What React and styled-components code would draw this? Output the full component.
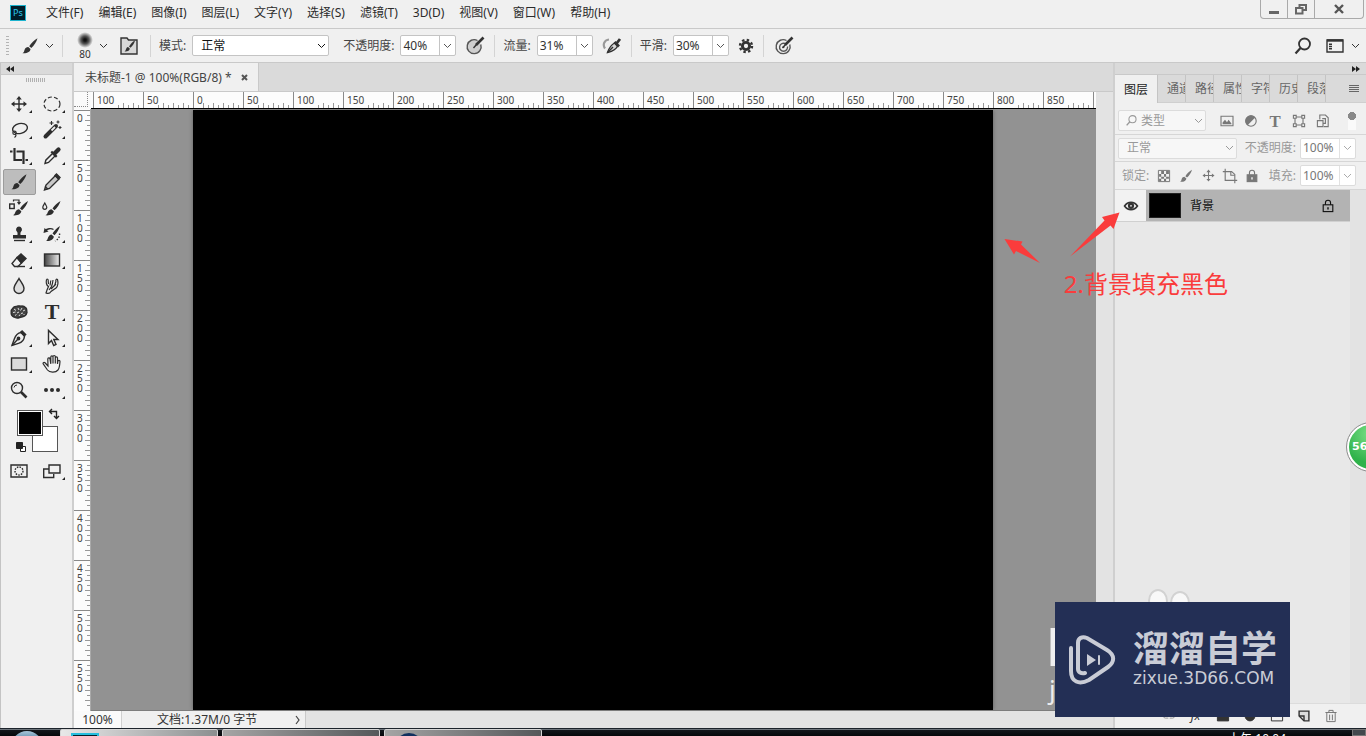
import React from "react";
import styled, { createGlobalStyle, css } from "styled-components";

const GlobalStyle = createGlobalStyle`
  * {
    box-sizing: border-box;
  }
  body {
    margin: 0;
    font-family: "Noto Sans", "Noto Sans CJK SC", sans-serif;
    font-size: 12px;
    line-height: 16px;
    color: #333;
    background-color: #f0f0f0;
  }
  button, input, select {
    font: inherit;
    color: inherit;
  }
  button {
    padding: 0;
    border: none;
    background: none;
  }
  svg {
    display: block;
    flex-shrink: 0;
  }
`;

const Shell = styled.div`
  position: relative;
  display: flex;
  flex-direction: column;
  height: 100vh;
  overflow: hidden;
`;

/* ---------- menu bar ---------- */

const MenuBar = styled.header`
  display: flex;
  align-items: center;
  height: 29px;
  padding: 0 2px 2px 10px;
  border-bottom: 1px solid #c9c9c9;
`;

const Menus = styled.nav`
  display: flex;
  flex: 1;
  gap: 15px;
  margin-left: 20px;
`;

const MenuButton = styled.button`
  white-space: nowrap;
  color: #2b2b2b;
`;

const PsLogo = styled.div`
  width: 16px;
  height: 16px;
  border: 1px solid #1cb4cf;
  background-color: #001e2b;
  color: #2fc9ee;
  font-size: 9px;
  line-height: 14px;
  text-align: center;
`;

const WindowButtons = styled.div`
  display: flex;
  align-self: flex-start;
  height: 19px;
  border: 1px solid #a9a9a9;
  border-top: none;
  border-radius: 0 0 4px 4px;
`;

const WindowButton = styled.button`
  display: flex;
  align-items: center;
  justify-content: center;
  width: ${({ $wide }) => ($wide ? "48px" : "27px")};
  border-right: 1px solid #a9a9a9;
  &:last-child {
    border-right: none;
  }
`;

/* ---------- option bar ---------- */

const OptionBar = styled.div`
  display: flex;
  align-items: center;
  height: 34px;
  padding: 0 6px;
  border-bottom: 1px solid #c9c9c9;
`;

const Grip = styled.div`
  width: 3px;
  height: 20px;
  margin-right: 6px;
  background: repeating-linear-gradient(#b4b4b4 0 1px, transparent 1px 3px);
`;

const Divider = styled.div`
  width: 1px;
  height: 22px;
  margin: 0 8px 0 ${({ $spaced }) => ($spaced ? "8px" : "0")};
  background-color: #d4d4d4;
`;

const IconButton = styled.button`
  display: flex;
  align-items: center;
  justify-content: center;
  align-self: center;
  width: ${({ $w }) => $w || 24}px;
  height: 24px;
`;

const BrushPreview = styled.button`
  display: flex;
  flex-direction: column;
  align-items: center;
  width: 28px;
  font-size: 10px;
  line-height: 12px;
`;

const BrushDot = styled.span`
  width: 16px;
  height: 16px;
  border-radius: 50%;
  background: radial-gradient(#111 10%, #555 35%, transparent 70%);
`;

const Label = styled.label`
  margin-right: ${({ $dim }) => ($dim ? "4px" : "6px")};
  white-space: nowrap;
  color: ${({ $dim }) => ($dim ? "#999" : "#444")};
`;

const SelectWrap = styled.div`
  display: grid;
  align-items: center;
  width: ${({ $w }) => $w}px;
  height: 21px;
  margin-right: ${({ $after }) => $after || 0}px;
  border: 1px solid ${({ $dim }) => ($dim ? "#dcdcdc" : "#c4c4c4")};
  border-radius: 2px;
  background-color: ${({ $dim }) => ($dim ? "#f7f7f7" : "#fff")};
  color: ${({ $dim }) => ($dim ? "#999" : "#111")};
  > * {
    grid-area: 1 / 1;
  }
  svg {
    justify-self: end;
    margin-right: 2px;
    pointer-events: none;
  }
`;

const Select = styled.select`
  width: 100%;
  height: 19px;
  padding: 0 8px;
  border: none;
  appearance: none;
  background: transparent;
`;

const SearchSelect = styled(SelectWrap)`
  select {
    padding-left: 22px;
  }
  svg:first-of-type {
    justify-self: start;
    margin-left: 6px;
  }
`;

const FieldWrap = styled.div`
  display: flex;
  width: 56px;
  height: 21px;
  border: 1px solid ${({ $dim }) => ($dim ? "#dcdcdc" : "#c4c4c4")};
  border-radius: 2px;
  background-color: #fff;
`;

const FieldInput = styled.input`
  flex: 1;
  min-width: 0;
  padding: 0 2px;
  border: none;
  background: transparent;
  outline: none;
`;

const FieldArrow = styled.button`
  display: flex;
  align-items: center;
  justify-content: center;
  width: 16px;
  border-left: 1px solid ${({ $dim }) => ($dim ? "#e2e2e2" : "#c4c4c4")};
  color: ${({ $dim }) => ($dim ? "#aaa" : "#555")};
`;

const Spacer = styled.div`
  flex: 1;
`;

/* ---------- workspace ---------- */

const Workspace = styled.div`
  display: flex;
  flex: 1;
  min-height: 0;
`;

const PanelHead = styled.div`
  display: flex;
  align-items: center;
  justify-content: ${({ $end }) => ($end ? "flex-end" : "flex-start")};
  height: 12px;
  padding: 0 6px 0 5px;
  border-bottom: 1px solid #c9c9c9;
  background-color: #dadada;
`;

const ToolsPanel = styled.aside`
  display: flex;
  flex-direction: column;
  width: 74px;
  border-left: 1px solid #c4c4c4;
  border-right: 2px solid #cfcfcf;
`;

const ToolsGrip = styled.div`
  width: 20px;
  height: 4px;
  margin: 3px auto 9px 25px;
  background: repeating-linear-gradient(90deg, #b0b0b0 0 1px, transparent 1px 2px);
`;

const ToolGrid = styled.div`
  display: grid;
  grid-template-columns: 33px 33px;
  grid-auto-rows: 26px;
  padding-left: 2px;
`;

const Tool = styled.button`
  position: relative;
  display: flex;
  align-items: center;
  justify-content: center;
  padding-right: 1px;
  border: 1px solid transparent;
  border-radius: 2px;
  color: #2d2d2d;
  ${({ $active }) =>
    $active &&
    css`
      border-color: #9c9c9c;
      background-color: #bdbdbd;
    `}
  ${({ $more }) =>
    $more &&
    css`
      &::after {
        content: "";
        position: absolute;
        right: 3px;
        bottom: 3px;
        border-left: 3px solid transparent;
        border-bottom: 3px solid #222;
      }
    `}
`;

const Swatches = styled.div`
  position: relative;
  width: 41px;
  height: 42px;
  margin: 7px 0 6px 16px;
`;

const Swatch = styled.button`
  position: absolute;
  width: 26px;
  height: 26px;
  border: 1px solid #555;
  ${({ $front }) =>
    $front
      ? css`
          top: 0;
          left: 0;
          background-color: #000;
          box-shadow: inset 0 0 0 1px #fff;
        `
      : css`
          right: 0;
          bottom: 0;
          background-color: #fff;
        `}
`;

const SwapIcon = styled.svg`
  position: absolute;
  top: -2px;
  right: -2px;
`;

const ResetIcon = styled.svg`
  position: absolute;
  left: -1px;
  bottom: -1px;
`;

const Document = styled.main`
  display: flex;
  flex: 1;
  flex-direction: column;
  min-width: 0;
`;

const TabStrip = styled.div`
  display: flex;
  height: 29px;
  border-bottom: 1px solid #c9c9c9;
  background-color: #dadada;
`;

const DocTab = styled.button`
  display: flex;
  align-items: center;
  gap: 9px;
  padding: 1px 10px 0 11px;
  border-right: 1px solid #c9c9c9;
  background-color: #f0f0f0;
  color: #444;
  white-space: nowrap;
`;

const Stage = styled.div`
  display: grid;
  grid-template-columns: 17px minmax(0, 1fr);
  grid-template-rows: 17px minmax(0, 1fr);
  flex: 1;
  min-height: 0;
  padding-right: 17px;
  background-color: #e3e3e3;
`;

const RulerCorner = styled.div`
  padding: 0 3px 3px 0;
  background-color: #fafafa;
  &::after {
    content: "";
    display: block;
    height: 100%;
    border-right: 1px dotted #888;
    border-bottom: 1px dotted #888;
  }
`;

const RulerTop = styled.div`
  display: flex;
  overflow: hidden;
  padding-left: 2px;
  border-bottom: 1px solid #000;
  background-color: #fcfcfc;
`;

const TopMark = styled.div`
  flex: 0 0 50px;
  height: 16px;
  border-left: 1px solid #8a8a8a;
  background:
    repeating-linear-gradient(90deg, transparent 0 9px, #999 9px 10px) 0 100% / 100% 5px no-repeat,
    repeating-linear-gradient(90deg, transparent 0 4px, #999 4px 5px) 0 100% / 100% 3px no-repeat;
  span {
    display: inline-block;
    padding-left: 3px;
    background-color: #fcfcfc;
    color: #444;
    font-size: 10px;
    line-height: 16px;
  }
`;

const RulerLeft = styled.div`
  overflow: hidden;
  padding-top: 1px;
  background-color: #fcfcfc;
  border-right: 1px solid #aaa;
`;

const LeftMark = styled.div`
  height: 50px;
  padding: 2px 0 0 3px;
  border-top: 1px solid #8a8a8a;
  background:
    repeating-linear-gradient(transparent 0 9px, #999 9px 10px) 100% 0 / 5px 100% no-repeat,
    repeating-linear-gradient(transparent 0 4px, #999 4px 5px) 100% 0 / 3px 100% no-repeat;
  span {
    display: block;
    width: 7px;
    color: #444;
    font-size: 10px;
    line-height: 10px;
    word-break: break-all;
  }
`;

const Pasteboard = styled.div`
  overflow: hidden;
  padding: 1px 0 0 102px;
  border-bottom: 1px solid #7d7d7d;
  background-color: #929292;
`;

const Artboard = styled.div`
  width: 800px;
  height: 600px;
  background-color: #000;
  box-shadow: 0 0 4px rgba(0, 0, 0, 0.35);
`;

const StatusBar = styled.footer`
  display: flex;
  height: 17px;
  background-color: #e3e3e3;
`;

const ZoomBox = styled.input`
  width: 48px;
  border: none;
  border-right: 1px solid #d0d0d0;
  background-color: #fafafa;
  text-align: center;
  outline: none;
`;

const StatusInfo = styled.button`
  display: flex;
  align-items: center;
  justify-content: space-between;
  width: 184px;
  padding: 0 5px 0 35px;
  border-right: 1px solid #c9c9c9;
  background-color: #f0f0f0;
`;

/* ---------- layers panel ---------- */

const LayersPanel = styled.aside`
  display: flex;
  flex-direction: column;
  width: 253px;
  border-left: 2px solid #cfcfcf;
`;

const PanelTabs = styled.div`
  display: flex;
  height: 28px;
  padding-right: 6px;
  border-bottom: 1px solid #cfcfcf;
  background-color: #dadada;
`;

const PanelTab = styled.button`
  overflow: hidden;
  width: 28px;
  padding: 1px 0 0 9px;
  border-right: 1px solid #c4c4c4;
  color: #666;
  text-align: left;
  white-space: nowrap;
  ${({ $active }) =>
    $active &&
    css`
      width: 43px;
      height: 28px;
      background-color: #f0f0f0;
      color: #222;
    `}
`;

const PanelRow = styled.div`
  display: flex;
  align-items: center;
  height: ${({ $h }) => $h || 27}px;
  padding: ${({ $top }) => $top || 0}px 10px 0 ${({ $left }) => $left || 3}px;
  border-bottom: 1px solid #d6d6d6;
  color: #777;
`;

const Icons = styled.div`
  display: flex;
  margin-left: ${({ $gap }) => $gap || 0}px;
`;

const FilterToggle = styled.button`
  width: 8px;
  height: 18px;
  margin-left: auto;
  background:
    radial-gradient(circle at 4px 4px, #888 4px, transparent 4px),
    linear-gradient(transparent 8px, #fafafa 8px);
`;

const LayerList = styled.div`
  flex: 1;
  min-height: 0;
  padding-right: 16px;
  background: linear-gradient(#e3e3e3, #e3e3e3) 100% 0 / 16px 100% no-repeat #e8e8e8;
`;

const LayerRow = styled.div`
  display: flex;
  height: 32px;
  border-bottom: 1px solid #d0d0d0;
`;

const EyeButton = styled.button`
  display: flex;
  align-items: center;
  justify-content: center;
  width: 31px;
  background-color: #f2f2f2;
`;

const LayerButton = styled.button`
  display: flex;
  flex: 1;
  align-items: center;
  gap: 9px;
  padding: 0 14px 0 3px;
  background-color: #b3b3b3;
  color: #111;
  svg {
    margin-left: auto;
  }
`;

const Thumb = styled.span`
  width: 32px;
  height: 25px;
  border: 1px solid #222;
  background-color: #000;
`;

const PanelFoot = styled.div`
  display: flex;
  align-items: center;
  justify-content: flex-end;
  height: 25px;
  padding-right: 22px;
  border-top: 1px solid #dcdcdc;
`;

/* ---------- taskbar ---------- */

const Taskbar = styled.div`
  display: flex;
  flex-shrink: 0;
  height: 8px;
  overflow: hidden;
  border-top: 1px solid #1c232b;
  background: linear-gradient(#6c737a 0 1px, #12161b 1px, #05080b);
  color: #fff;
`;

const StartOrb = styled.button`
  width: 32px;
  height: 32px;
  margin: 2px 17px 0 11px;
  border-radius: 50%;
  background: linear-gradient(#a9c6da, #4d7d9d 10px);
`;

const Task = styled.button`
  display: flex;
  width: 158px;
  height: 40px;
  margin-right: 4px;
  padding-left: 10px;
  padding-top: 3px;
  border: 1px solid #d5d5d5;
  border-radius: 2px;
  background: ${({ $active }) =>
    $active ? "linear-gradient(90deg, #e8e8e8, #8c8f90)" : "linear-gradient(90deg, #a5a5a5, #55585a)"};
`;

const TaskIcon = styled.span`
  width: 28px;
  height: 28px;
  border: 2px solid #26bede;
  background-color: #06202b;
  ${({ $round }) =>
    $round &&
    css`
      border: none;
      border-radius: 50%;
      background-color: #12305f;
    `}
`;

const Clock = styled.time`
  margin: 2px 66px 0 auto;
  white-space: nowrap;
`;

const ShowDesktop = styled.button`
  width: 14px;
  border: 1px solid #777;
  background-color: #42484d;
`;

/* ---------- things lying over the window ---------- */

const Note = styled.p`
  position: absolute;
  top: 268px;
  right: 138px;
  margin: 0;
  color: #fa3c3c;
  font-size: 24px;
  line-height: 32px;
`;

const Arrows = styled.svg`
  position: absolute;
  top: 210px;
  right: 246px;
`;

const BackMark = styled.div`
  position: absolute;
  right: 172px;
  bottom: 20px;
  width: 148px;
  height: 128px;
  color: rgba(255, 255, 255, 0.85);
`;

const BackBig = styled.div`
  padding-top: 31px;
  font: 56px/56px "Liberation Sans", sans-serif;
`;

const BackSmall = styled.div`
  padding-left: 3px;
  font-size: 26px;
  line-height: 28px;
`;

const Ears = styled.svg`
  position: absolute;
  top: 0;
  right: 0;
`;

const Brand = styled.div`
  position: absolute;
  right: 76px;
  bottom: 19px;
  display: flex;
  align-items: center;
  gap: 17px;
  width: 235px;
  height: 115px;
  padding-left: 13px;
  background-color: #232f55;
  color: #c9ccd6;
`;

const BrandText = styled.div`
  display: flex;
  flex-direction: column;
  padding-bottom: 7px;
`;

const BrandName = styled.div`
  font: 700 36px/44px "Noto Sans CJK SC", sans-serif;
  white-space: nowrap;
`;

const BrandSite = styled.div`
  font: 17px/20px "DejaVu Sans", sans-serif;
`;

const SpeedBall = styled.button`
  position: absolute;
  top: 423px;
  right: -29px;
  width: 48px;
  height: 48px;
  padding-left: 3px;
  border: 2px solid #fff;
  border-radius: 50%;
  outline: 1px solid #8f8f8f;
  background: radial-gradient(circle at 50% 20%, #7be087, #2fb24a 70%);
  color: #fff;
  font: 700 11px/16px "DejaVu Sans", sans-serif;
  text-align: left;
`;

const Icon = ({ size = 20, children, ...rest }) => (
  <svg
    width={size}
    height={size}
    viewBox="0 0 20 20"
    fill="none"
    stroke="currentColor"
    strokeWidth="1.4"
    {...rest}
  >
    {children}
  </svg>
);

const Chevron = () => (
  <svg width="9" height="6" viewBox="0 0 9 6" fill="none" stroke="currentColor">
    <path d="M1 1l3.5 3.5L8 1" />
  </svg>
);

const Brush = ({ size }) => (
  <Icon size={size} stroke="none" fill="currentColor">
    <path d="M17.5 2.2c-3 1.8-6.500 5-8.300 8l2.100 1.800c2.800-2.600 5.200-6.200 6.200-9.800z" />
    <path d="M8.300 11.100l2.200 1.900c0 2.600-3.300 4.600-8 4.200 1.700-.8 1.500-1.900 2.100-3.500.6-1.700 2.100-2.700 3.700-2.600z" />
  </Icon>
);

const Move = ({ size }) => (
  <Icon size={size}>
    <path d="M10 4v12M4 10h12" />
    <path
      stroke="none"
      fill="currentColor"
      d="M10 2l2.800 3.500H7.200zM10 18l2.800-3.500H7.200zM2 10l3.500-2.800v5.600zM18 10l-3.500-2.800v5.600z"
    />
  </Icon>
);

const Search = ({ size, thin }) => (
  <Icon size={size} strokeWidth={thin ? 1.6 : 1.8}>
    <circle cx="11.500" cy="8" r="5.500" />
    <path d="M7.500 12L2.500 17.500" strokeWidth="2.200" />
  </Icon>
);

const Lock = ({ size, solid }) => (
  <Icon size={size}>
    <rect x="4" y="8.500" width="12" height="8.500" fill={solid ? "currentColor" : "none"} />
    <path d="M6.800 8.500V6a3.200 3.200 0 0 1 6.400 0v2.500" />
    <path d="M10 11.500v3" stroke={solid ? "#f0f0f0" : "currentColor"} strokeWidth="1.800" />
  </Icon>
);

const Pressure = ({ target }) => (
  <Icon>
    <path d="M12.500 4.500A7 7 0 1 0 15.800 8.500" fill={target ? "none" : "#cfcfcf"} stroke="#555" />
    {target && <path d="M11 7.500a4 4 0 1 0 2.500 3" stroke="#555" />}
    {target && <circle cx="9.500" cy="11" r="1" fill="currentColor" stroke="none" />}
    <path d="M18.500 1.500L11 9" strokeWidth="2.600" />
    <path d="M11.500 8.500L8.500 12" />
  </Icon>
);

const TypeGlyph = ({ size = 20, font = 22, y = 17 }) => (
  <Icon size={size} stroke="none" fill="currentColor">
    <text x="10" y={y} fontSize={font} fontWeight="700" fontFamily="Liberation Serif, serif" textAnchor="middle">
      T
    </text>
  </Icon>
);

const DoubleArrow = ({ right }) => (
  <svg width="8" height="6" viewBox="0 0 8 6" fill="#222">
    <path d={right ? "M0 0l4 3-4 3zM4 0l4 3-4 3z" : "M4 0v6L0 3zM8 0v6L4 3z"} />
  </svg>
);

const tools = [
  { name: "移动", more: true, icon: <Move /> },
  {
    name: "选框",
    more: true,
    icon: (
      <Icon>
        <ellipse cx="10" cy="10" rx="8" ry="7" strokeWidth="1.200" strokeDasharray="4 2.200" />
      </Icon>
    ),
  },
  {
    name: "套索",
    more: true,
    icon: (
      <Icon>
        <ellipse cx="11" cy="8.500" rx="7.500" ry="5" transform="rotate(-12 11 8.500)" />
        <circle cx="5.500" cy="12.800" r="1.700" strokeWidth="1.100" />
        <path d="M6.500 14c1 1.500.5 2.500-1 3.500" strokeWidth="1.100" />
      </Icon>
    ),
  },
  {
    name: "魔棒",
    more: true,
    icon: (
      <Icon>
        <path d="M3.500 16.500L14 6" strokeWidth="4" strokeLinecap="round" />
        <path d="M9.500 10.500l3.500-3.500" stroke="#eee" strokeWidth="1.800" />
        <path d="M9.500 1v4M7.500 3h4M16 .5v3M14.500 2h3M18 6v3M16.500 7.500h3" strokeWidth="1.100" />
      </Icon>
    ),
  },
  {
    name: "裁剪",
    more: true,
    icon: (
      <Icon strokeWidth="2.200">
        <path d="M5.500 2v12H13M1 5.500h2.500M7.500 5.500h7V18M16.500 14H19" />
      </Icon>
    ),
  },
  {
    name: "吸管",
    more: true,
    icon: (
      <Icon>
        <path d="M11 7l2.500 2.500-7 7-3.500 1 .8-3.300z" />
        <path d="M9.300 5.500l5.400 5.400" strokeWidth="2.200" />
        <path d="M12.500 7.500l4-4" strokeWidth="4.200" strokeLinecap="round" />
      </Icon>
    ),
  },
  { name: "画笔", active: true, icon: <Brush /> },
  {
    name: "铅笔",
    icon: (
      <Icon>
        <path d="M13.500 3.500l3.500 3.500-9.500 9.500-5 1.500 1.500-5z" fill="#c8c8c8" />
        <path d="M3 14.500l2.800 2.500" />
        <path d="M13 3.500L14.500 2 18 5.500 16.500 7z" fill="currentColor" />
      </Icon>
    ),
  },
  {
    name: "颜色替换",
    icon: (
      <Icon>
        <rect x="0.700" y="6" width="4.500" height="4.500" />
        <path d="M4.500 3.500V2H10v3M8.500 4l1.500 2 1.500-2" strokeWidth="1.200" />
        <path
          stroke="none"
          fill="currentColor"
          d="M19 3c-3 1.800-6 4.500-8 7.500l2 1.800c2.800-2.600 5-5.800 6-9.300zM10 11.300l2.300 2c0 2.500-3.500 4.500-8.300 4 1.800-1 1.800-2 2.500-3.500.8-1.500 2-2.500 3.500-2.500z"
        />
      </Icon>
    ),
  },
  {
    name: "混合器画笔",
    icon: (
      <Icon>
        <path d="M2.800 5C1.500 7.500.8 8.300.8 9.300a2 2 0 0 0 4 0C4.800 8.300 4 7.500 2.800 5z" strokeWidth="1.200" />
        <path
          stroke="none"
          fill="currentColor"
          d="M18.500 3c-3 1.800-6 4.500-8 7.500l2 1.800c2.800-2.600 5-5.800 6-9.300zM9.500 11.300l2.300 2c0 2.500-3.500 4.500-8.300 4 1.800-1 1.800-2 2.500-3.500.8-1.500 2-2.500 3.500-2.500z"
        />
      </Icon>
    ),
  },
  {
    name: "图章",
    more: true,
    icon: (
      <Icon stroke="none" fill="currentColor">
        <path d="M10 2.500a3 3 0 0 1 2 5.200c-.8.900-.6 2.300-.4 3.300H17v3.500H4V11h4.400c.2-1 .4-2.400-.4-3.300a3 3 0 0 1 2-5.200z" />
        <path d="M5 15.800h11v1.400H5z" />
      </Icon>
    ),
  },
  {
    name: "历史记录画笔",
    more: true,
    icon: (
      <Icon>
        <path d="M3 7c2-2.500 6-3 8.500-1.500" />
        <path d="M1.500 9l1-5 4 3.500z" fill="currentColor" stroke="none" />
        <path d="M17.500 9.500c.5 3-1 6-4.500 7.500" strokeDasharray="1.500 1.500" />
        <path
          stroke="none"
          fill="currentColor"
          d="M18 2c-3 1.800-5.500 4.500-7.500 7.500l2 1.800c2.500-2.600 4.500-5.800 5.500-9.300zM9.500 10.500l2.300 2c0 2.700-3.300 5-7.800 4.500 1.600-1 1.600-2.200 2.200-3.700.8-1.600 1.900-2.800 3.300-2.800z"
        />
      </Icon>
    ),
  },
  {
    name: "橡皮擦",
    more: true,
    icon: (
      <Icon>
        <path d="M8 7.500L12 4l5 4.500-4.500 4.500z" fill="currentColor" />
        <path d="M8 7.500l4.500 5.500-3.500 3.500H5.500L3 13.500z" />
        <path d="M8 16.500h8" />
      </Icon>
    ),
  },
  {
    name: "渐变",
    more: true,
    icon: (
      <Icon>
        <defs>
          <linearGradient id="fade">
            <stop stopColor="#444" />
            <stop offset="1" stopColor="#eee" />
          </linearGradient>
        </defs>
        <rect x="2.500" y="4" width="15" height="12" fill="url(#fade)" />
      </Icon>
    ),
  },
  {
    name: "模糊",
    icon: (
      <Icon>
        <path d="M10 2.500c-2.500 4.500-5 7-5 10a5 5 0 0 0 10 0c0-3-2.500-5.500-5-10z" fill="#ddd" />
      </Icon>
    ),
  },
  {
    name: "涂抹",
    icon: (
      <Icon strokeWidth="1.200">
        <path d="M4.500 3.500C4 6 4 9 6.500 10.500L5 14l-1 3c2 .8 4 .3 5-1.500l5-3.500c2-2 2.300-5.500 1.500-8.500-1.200-.8-2 .3-1.600 2L12.500 10M4.500 3.500c1-.8 2 0 1.700 1.500L6.500 8M8.800 4.500L8 9.500M11 4c-.2 2-.5 4-1.500 6.500L7 14M14 8l-5 5" />
      </Icon>
    ),
  },
  {
    name: "海绵",
    icon: (
      <Icon>
        <path
          d="M4 6c1-2 3-1.500 4-1.800 2-1 3 .3 5-.2 2 0 3 1 4 2 1.200 1.500.5 3 1 4.500-.3 2-1.500 3-2.500 3.500-2 1.500-3 .5-5 1.500-2 .8-4 .5-5.500-.5C2.500 14 2 12 2.200 10 2 8 2.800 7 4 6z"
          fill="#444"
        />
        <path
          d="M5 7l2 1.500M9 6l1 2M13 6l-1.500 2.500M16 8l-2 1M4 10.500l2.500-.5M8 11l2-1M12 11.500l2-.500M6 13.500l1.500-1M10 14l1-1.500M14.500 13l1-1"
          stroke="#ddd"
          strokeWidth="1"
        />
      </Icon>
    ),
  },
  { name: "文字", more: true, icon: <TypeGlyph /> },
  {
    name: "钢笔",
    more: true,
    icon: (
      <Icon>
        <path d="M12 4.500l3.500 3.800c-.5 4-2.500 6-6 7L3 17.500l2.200-6.300C6.500 7.500 8.500 5 12 4.500z" />
        <path d="M3 17.500l6-6.500" />
        <circle cx="9.500" cy="10.500" r="1.200" fill="currentColor" />
        <path d="M12 3l4.500 4.700" strokeWidth="3.200" />
      </Icon>
    ),
  },
  {
    name: "路径选择",
    more: true,
    icon: (
      <Icon>
        <path d="M6.500 2.500v13l3-3 2.200 5 2.300-1-2.200-5H16z" fill="#f4f4f4" />
      </Icon>
    ),
  },
  {
    name: "矩形",
    more: true,
    icon: (
      <Icon>
        <rect x="2.500" y="4" width="15" height="12" fill="#dadada" />
      </Icon>
    ),
  },
  {
    name: "抓手",
    more: true,
    icon: (
      <Icon strokeWidth="1.200">
        <path
          d="M6 12L3 8.800c-1.200-1-2.500.2-1.600 1.400L5.500 16c2 2.500 8 3 10.500 0 1.500-2 1.700-4 2-8.500 0-1.500-2-1.500-2.200 0L15.500 10V4c0-1.500-2-1.500-2.200 0v5.500V2.700c0-1.600-2.200-1.600-2.300 0v6.800V3c0-1.500-2.200-1.500-2.200 0v6.800L8 4.800c-.3-1.500-2.300-1.200-2.200.4z"
          fill="#f4f4f4"
        />
      </Icon>
    ),
  },
  {
    name: "缩放",
    icon: (
      <Icon>
        <circle cx="8" cy="8" r="5.500" fill="#eee" />
        <path d="M5 7.500a3 3 0 0 1 3-2.500" strokeWidth="1" />
        <path d="M12 12l5.500 5.500" strokeWidth="2.600" />
      </Icon>
    ),
  },
  {
    name: "更多",
    more: true,
    icon: (
      <Icon stroke="none" fill="currentColor">
        <circle cx="4" cy="10" r="2" />
        <circle cx="10" cy="10" r="2" />
        <circle cx="16" cy="10" r="2" />
      </Icon>
    ),
  },
];

const menus = [
  "文件(F)",
  "编辑(E)",
  "图像(I)",
  "图层(L)",
  "文字(Y)",
  "选择(S)",
  "滤镜(T)",
  "3D(D)",
  "视图(V)",
  "窗口(W)",
  "帮助(H)",
];
const topMarks = [100, 50, 0, 50, 100, 150, 200, 250, 300, 350, 400, 450, 500, 550, 600, 650, 700, 750, 800, 850];
const leftMarks = [0, 50, 100, 150, 200, 250, 300, 350, 400, 450, 500, 550];
const panelTabs = ["通道", "路径", "属性", "字符", "历史", "段落"];

const NumberField = ({ id, label, value, dim }) => (
  <>
    <Label htmlFor={id} $dim={dim}>
      {label}
    </Label>
    <FieldWrap $dim={dim}>
      <FieldInput id={id} defaultValue={value} />
      <FieldArrow $dim={dim} aria-label={label}>
        <Chevron />
      </FieldArrow>
    </FieldWrap>
  </>
);

const OptionsRow = () => (
  <OptionBar>
    <Grip />
    <IconButton $w={30} aria-label="画笔工具">
      <Brush />
    </IconButton>
    <Chevron />
    <Divider $spaced />
    <BrushPreview>
      <BrushDot />
      80
    </BrushPreview>
    <Chevron />
    <IconButton $w={42} aria-label="画笔设置">
      <Icon>
        <path d="M2 2h6l1.500 2H18v14H2z" fill="#d8d8d8" />
        <path
          stroke="none"
          fill="currentColor"
          d="M16 4.500c-2.500 1-4.500 3.500-6 6l1.500 1.300c2-2 4-4.500 4.500-7.300zM9 11l1.800 1.500c0 2-2.300 3.300-5.300 3 2-1 1-4 3.500-4.500z"
        />
      </Icon>
    </IconButton>
    <Divider />
    <Label htmlFor="mode">模式:</Label>
    <SelectWrap $w={137} $after={14}>
      <Select id="mode">
        <option>正常</option>
      </Select>
      <Chevron />
    </SelectWrap>
    <NumberField id="opacity" label="不透明度:" value="40%" />
    <IconButton $w={38} aria-label="压力控制不透明度">
      <Pressure />
    </IconButton>
    <Divider />
    <NumberField id="flow" label="流量:" value="31%" />
    <IconButton $w={38} aria-label="喷枪">
      <Icon>
        <path d="M7 3.500C2 4 .5 9 3 12.500" stroke="#999" strokeWidth="2.200" />
        <path d="M12.500 7l3 3c-1 3-4 5-10 6.500C7 12 9 9 12.500 7z" fill="#d8d8d8" />
        <path d="M5.500 16.500l5.500-5.500" />
        <path d="M14.500 7.500l3.500-4.500M12.500 6l4.500 4.500" strokeWidth="2.800" />
      </Icon>
    </IconButton>
    <Divider />
    <NumberField id="smooth" label="平滑:" value="30%" />
    <IconButton $w={34} aria-label="平滑选项">
      <Icon size={16}>
        <circle cx="10" cy="10" r="4.500" strokeWidth="3.600" />
        <circle cx="10" cy="10" r="7.500" strokeWidth="3" strokeDasharray="3 2.890" />
      </Icon>
    </IconButton>
    <Divider />
    <IconButton aria-label="压力控制大小">
      <Pressure target />
    </IconButton>
    <Spacer />
    <IconButton $w={32} aria-label="搜索">
      <Search />
    </IconButton>
    <IconButton $w={32} aria-label="工作区">
      <Icon>
        <path d="M2 4h16v12H2z" />
        <path d="M2 4.500h16" strokeWidth="2.400" />
        <path d="M5.500 7.500v6" strokeWidth="3" strokeDasharray="1.500 .7" />
      </Icon>
    </IconButton>
    <Chevron />
  </OptionBar>
);

const App = () => {
  return (
    <>
      <GlobalStyle />
      <Shell>
        <MenuBar>
          <PsLogo>Ps</PsLogo>
          <Menus>
            {menus.map((menu) => (
              <MenuButton key={menu}>{menu}</MenuButton>
            ))}
          </Menus>
          <WindowButtons>
            <WindowButton aria-label="最小化">
              <svg width="12" height="12" fill="#666">
                <path d="M1 8h10v3H1z" />
              </svg>
            </WindowButton>
            <WindowButton aria-label="还原">
              <svg width="12" height="12" fill="none" stroke="#666" strokeWidth="2">
                <path d="M4.500 4V2H11v5H8M1 5h6.500v5.500H1z" />
              </svg>
            </WindowButton>
            <WindowButton $wide aria-label="关闭">
              <svg width="12" height="12" fill="none" stroke="#555" strokeWidth="2.400">
                <path d="M2 2l8 8M10 2l-8 8" />
              </svg>
            </WindowButton>
          </WindowButtons>
        </MenuBar>

        <OptionsRow />

        <Workspace>
          <ToolsPanel>
            <PanelHead>
              <DoubleArrow />
            </PanelHead>
            <ToolsGrip />
            <ToolGrid>
              {tools.map(({ name, more, active, icon }) => (
                <Tool key={name} aria-label={name} $more={more} $active={active}>
                  {icon}
                </Tool>
              ))}
            </ToolGrid>
            <Swatches>
              <Swatch aria-label="背景色" />
              <Swatch $front aria-label="前景色" />
              <SwapIcon width="12" height="12" fill="none" stroke="#222" strokeWidth="1.400">
                <path d="M2 3.500h6.500V10M4 1L1.500 3.500 4 6M6 8l2.500 2.500L11 8" />
              </SwapIcon>
              <ResetIcon width="11" height="11" fill="#fff" stroke="#222">
                <path d="M4.500 4.500h5v5h-5z" />
                <path d="M.5.5h6v6h-6z" fill="#222" />
              </ResetIcon>
            </Swatches>
            <ToolGrid>
              <Tool aria-label="快速蒙版">
                <Icon>
                  <path d="M2 4h16v12H2z" />
                  <circle cx="10" cy="10" r="4" strokeDasharray="1.500 1.200" />
                </Icon>
              </Tool>
              <Tool aria-label="屏幕模式" $more>
                <Icon>
                  <path d="M7 8H1.700v8.500h10V13" />
                  <path d="M7 4h11v8H7z" />
                </Icon>
              </Tool>
            </ToolGrid>
          </ToolsPanel>

          <Document>
            <TabStrip>
              <DocTab>
                未标题-1 @ 100%(RGB/8) *
                <svg width="7" height="7" stroke="#555" strokeWidth="2">
                  <path d="M1 1l5 5M6 1L1 6" />
                </svg>
              </DocTab>
            </TabStrip>
            <Stage>
              <RulerCorner />
              <RulerTop>
                {topMarks.map((mark, i) => (
                  <TopMark key={i}>
                    <span>{mark}</span>
                  </TopMark>
                ))}
                <TopMark />
              </RulerTop>
              <RulerLeft>
                {leftMarks.map((mark) => (
                  <LeftMark key={mark}>
                    <span>{mark}</span>
                  </LeftMark>
                ))}
              </RulerLeft>
              <Pasteboard>
                <Artboard />
              </Pasteboard>
            </Stage>
            <StatusBar>
              <ZoomBox aria-label="缩放比例" defaultValue="100%" />
              <StatusInfo>
                文档:1.37M/0 字节
                <svg width="5" height="10" fill="none" stroke="#444" strokeWidth="1.200">
                  <path d="M1 1l3 4-3 4" />
                </svg>
              </StatusInfo>
            </StatusBar>
          </Document>

          <LayersPanel>
            <PanelHead $end>
              <DoubleArrow right />
            </PanelHead>
            <PanelTabs>
              <PanelTab $active>图层</PanelTab>
              {panelTabs.map((tab) => (
                <PanelTab key={tab}>{tab}</PanelTab>
              ))}
              <Spacer />
              <IconButton $w={12} aria-label="面板菜单">
                <svg width="10" height="8" stroke="#666">
                  <path d="M0 .5h10M0 2.500h10M0 4.500h10M0 6.500h10" />
                </svg>
              </IconButton>
            </PanelTabs>
            <PanelRow $h={32} $top={4}>
              <SearchSelect $w={88} $dim>
                <Search size={13} thin />
                <Select aria-label="筛选类型">
                  <option>类型</option>
                </Select>
                <Chevron />
              </SearchSelect>
              <Icons $gap={9}>
                <IconButton aria-label="像素图层">
                  <Icon size={16}>
                    <path d="M2.500 4h15v12h-15z" />
                    <path d="M4.500 14V12l3-3.500 2.500 3 2-3 3.500 4.500v1z" fill="currentColor" stroke="none" />
                  </Icon>
                </IconButton>
                <IconButton aria-label="调整图层">
                  <Icon size={16}>
                    <circle cx="10" cy="10" r="6.500" />
                    <path d="M14.600 5.400A6.500 6.500 0 0 0 5.400 14.600z" fill="currentColor" />
                  </Icon>
                </IconButton>
                <IconButton aria-label="文字图层">
                  <TypeGlyph size={16} font={21} />
                </IconButton>
                <IconButton aria-label="形状图层">
                  <Icon size={16}>
                    <path d="M5 5h10v10H5z" />
                    <path
                      d="M3 3h3.500v3.500H3zM13.500 3H17v3.500h-3.500zM3 13.500h3.500V17H3zM13.500 13.500H17V17h-3.500z"
                      fill="#f0f0f0"
                    />
                  </Icon>
                </IconButton>
                <IconButton aria-label="智能对象">
                  <Icon size={16}>
                    <path d="M6 8V2.500h7l3.500 3.500v11H11" />
                    <path d="M3 9.500h7V17H3zM9 7h4v6h-3" />
                  </Icon>
                </IconButton>
              </Icons>
              <FilterToggle aria-label="筛选开关" />
            </PanelRow>
            <PanelRow>
              <SelectWrap $w={119} $dim>
                <Select aria-label="混合模式">
                  <option>正常</option>
                </Select>
                <Chevron />
              </SelectWrap>
              <Spacer />
              <NumberField id="layer-opacity" label="不透明度:" value="100%" dim />
            </PanelRow>
            <PanelRow $h={28} $left={7}>
              <Label as="span" $dim>
                锁定:
              </Label>
              <Icons>
                <IconButton $w={22} aria-label="锁定透明像素">
                  <Icon size={14}>
                    <path d="M2 2h16v16H2z" />
                    <path
                      d="M6 3h4v4H6zM13 3h4v4h-4zM3 7h3v4H3zM10 7h3v4h-3zM6 11h4v3H6zM13 11h4v3h-4zM3 14h3v3H3zM10 14h3v3h-3z"
                      fill="currentColor"
                      stroke="none"
                    />
                  </Icon>
                </IconButton>
                <IconButton $w={22} aria-label="锁定图像像素">
                  <Brush size={16} />
                </IconButton>
                <IconButton $w={22} aria-label="锁定位置">
                  <Move size={15} />
                </IconButton>
                <IconButton $w={22} aria-label="防止自动嵌套">
                  <Icon size={16}>
                    <path d="M1 4.500h11l4 3.500v11M4 1v14.500h15" />
                    <path d="M11 5v4h5" />
                  </Icon>
                </IconButton>
                <IconButton $w={22} aria-label="锁定全部">
                  <Lock size={16} solid />
                </IconButton>
              </Icons>
              <Spacer />
              <NumberField id="fill" label="填充:" value="100%" dim />
            </PanelRow>
            <LayerList>
              <LayerRow>
                <EyeButton aria-label="可见性">
                  <Icon size={16}>
                    <path d="M2 10c4-6 12-6 16 0-4 6-12 6-16 0z" strokeWidth="2.200" />
                    <circle cx="10" cy="9.800" r="2.500" strokeWidth="2.800" />
                  </Icon>
                </EyeButton>
                <LayerButton>
                  <Thumb />
                  背景
                  <Lock size={16} />
                </LayerButton>
              </LayerRow>
            </LayerList>
            <PanelFoot>
              <IconButton $w={27} aria-label="链接">
                <Icon size={14} stroke="#999">
                  <path d="M9 13H5a3 3 0 0 1 0-6h4M11 7h4a3 3 0 0 1 0 6h-4M6 10h8" />
                </Icon>
              </IconButton>
              <IconButton $w={27}>
                <i>fx</i>
              </IconButton>
              <IconButton $w={27} aria-label="蒙版">
                <Icon size={14}>
                  <path d="M2 3h16v14H2z" fill="currentColor" />
                </Icon>
              </IconButton>
              <IconButton $w={27} aria-label="调整">
                <Icon size={14}>
                  <circle cx="10" cy="10" r="7" fill="currentColor" />
                </Icon>
              </IconButton>
              <IconButton $w={27} aria-label="新建组">
                <Icon size={14}>
                  <path d="M2 3h6l2 2h8v12H2z" />
                </Icon>
              </IconButton>
              <IconButton $w={27} aria-label="新建图层">
                <Icon size={14} strokeWidth="2">
                  <path d="M3 3h14v14h-7l-7-7z" fill="#ddd" />
                  <path d="M3 10h7v7" />
                </Icon>
              </IconButton>
              <IconButton $w={27} aria-label="删除">
                <Icon size={14} stroke="#777">
                  <path d="M2 5h16M7 5V2h6v3M4 5v13h12V5M8 8v8M12 8v8" />
                </Icon>
              </IconButton>
            </PanelFoot>
          </LayersPanel>
        </Workspace>

        <Taskbar>
          <StartOrb aria-label="开始" />
          <Task $active aria-label="Photoshop">
            <TaskIcon />
          </Task>
          <Task aria-label="窗口" />
          <Task aria-label="浏览器">
            <TaskIcon $round />
          </Task>
          <Clock>上午 10:04</Clock>
          <ShowDesktop aria-label="显示桌面" />
        </Taskbar>

        <Arrows width="116" height="56" fill="#fa3c3c">
          <path d="M0.500 29L18.500 31.500 17 34.500 36 53 12 41 10 44.500z" />
          <path d="M115.500 2.500L98 7l2.500 3.500L66 46.500 106.500 15.500l3 3.500z" />
        </Arrows>
        <Note>2.背景填充黑色</Note>

        <BackMark>
          <Ears width="50" height="40" fill="#f8f8f8" stroke="#d2d2d2" strokeWidth="2">
            <ellipse cx="14" cy="13" rx="9" ry="11" />
            <ellipse cx="36" cy="15" rx="9" ry="11" />
          </Ears>
          <BackBig>B</BackBig>
          <BackSmall>j</BackSmall>
        </BackMark>
        <Brand>
          <svg
            width="48"
            height="52"
            viewBox="0 0 48 52"
            fill="none"
            stroke="#c9ccd6"
            strokeWidth="4"
            strokeLinecap="round"
          >
            <path d="M17 39c-4 1-7-1-7-4V9c0-5 4-7 9-5l20 12c8 5 8 12 1 17L21 46C11 51 3 48 3 37V14" />
            <path d="M19 20l9 6-9 6z" fill="#c9ccd6" stroke="none" />
            <path d="M31 22v8" strokeWidth="2" />
          </svg>
          <BrandText>
            <BrandName>溜溜自学</BrandName>
            <BrandSite>zixue.3D66.COM</BrandSite>
          </BrandText>
        </Brand>
        <SpeedBall>56</SpeedBall>
      </Shell>
    </>
  );
};

export default App;
